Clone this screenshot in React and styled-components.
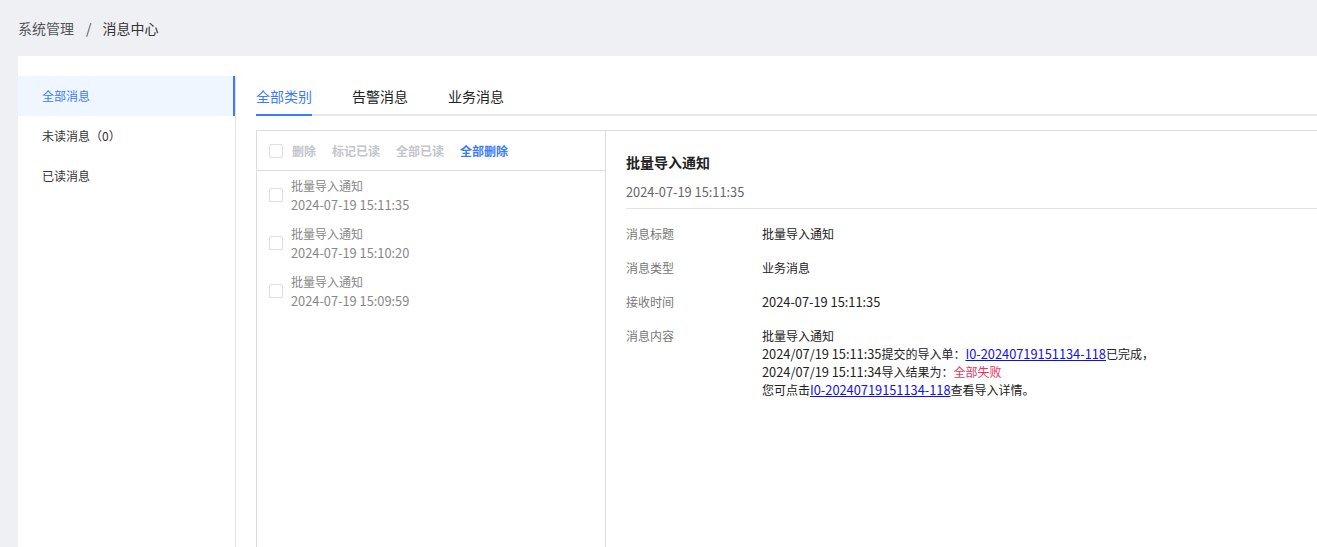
import React, { useState } from 'react';
import styled, { createGlobalStyle } from 'styled-components';

const GlobalStyle = createGlobalStyle`
  html, body {
    margin: 0;
    padding: 0;
    background: #eff0f4;
    overflow: hidden;
  }
  body {
    font-family: "Noto Sans CJK SC", "Noto Sans", sans-serif;
    font-size: 12px;
    color: #333;
  }
  * {
    box-sizing: border-box;
  }
`;

const Page = styled.div`
  width: 1420px;
  height: 620px;
  display: flex;
  flex-direction: column;
`;

const Breadcrumb = styled.div`
  height: 56px;
  display: flex;
  align-items: center;
  padding-left: 18px;
  font-size: 14px;
  color: #555;
`;
const Crumb = styled.span`
  color: ${(props) => (props.current ? '#333' : '#555')};
`;
const Sep = styled.span`
  margin: 0 11px 0 12px;
  color: #555;
`;

const Card = styled.div`
  flex: 1;
  margin-left: 18px;
  background: #fff;
  display: flex;
`;

const Menu = styled.ul`
  list-style: none;
  margin: 20px 0 0;
  padding: 0;
  width: 218px;
  border-right: 1px solid #e3e1ea;
`;
const MenuItem = styled.li`
  height: 40px;
  display: flex;
  align-items: center;
  padding-left: 24px;
  padding-bottom: 1px;
  font-size: 12px;
  color: ${(props) => (props.active ? '#3b7bff' : '#333')};
  background: ${(props) => (props.active ? '#f0f6ff' : 'transparent')};
  box-shadow: ${(props) => (props.active ? 'inset -2px 0 0 #3b7bff' : 'none')};
  cursor: pointer;
`;

const Main = styled.div`
  flex: 1;
  padding: 20px 0 0 20px;
  display: flex;
  flex-direction: column;
`;

const Tabs = styled.div`
  display: flex;
  gap: 40px;
  height: 40px;
  border-bottom: 2px solid #e4e7ed;
`;
const Tab = styled.div`
  font-size: 14px;
  display: flex;
  align-items: center;
  padding-top: 2px;
  margin-bottom: -2px;
  color: ${(props) => (props.active ? '#3b7bff' : '#222')};
  border-bottom: 2px solid ${(props) => (props.active ? '#3b7bff' : 'transparent')};
  cursor: pointer;
`;

const Box = styled.div`
  margin-top: 14px;
  flex: 1;
  display: flex;
  border: 1px solid #dcdcdc;
  border-bottom: none;
`;

const ListPanel = styled.div`
  width: 349px;
  border-right: 1px solid #dcdcdc;
`;
const Toolbar = styled.div`
  height: 40px;
  display: flex;
  align-items: center;
  padding-left: 12px;
  border-bottom: 1px solid #dcdcdc;
`;
const Check = styled.span`
  width: 14px;
  height: 14px;
  border: 1px solid #dcdfe6;
  border-radius: 2px;
  background: #fff;
  flex-shrink: 0;
`;
const Action = styled.span`
  font-size: 12px;
  font-weight: 700;
  margin-left: ${(props) => props.gap}px;
  color: ${(props) => (props.enabled ? '#3b7bff' : '#c3c5cb')};
  cursor: ${(props) => (props.enabled ? 'pointer' : 'default')};
`;

const Items = styled.div`
  padding-top: 0;
`;
const Item = styled.div`
  height: 48px;
  display: flex;
  align-items: center;
  padding-left: 12px;
  gap: 8px;
`;
const ItemText = styled.div`
  display: flex;
  flex-direction: column;
  color: #888;
  line-height: 19px;
`;
const ItemDate = styled.span`
  font-size: 12.8px;
`;

const Detail = styled.div`
  flex: 1;
  padding: 20px 0 0 20px;
`;
const DetailHead = styled.div`
  border-bottom: 1px solid #e4e4e8;
  padding-bottom: 6px;
`;
const DetailTitle = styled.div`
  font-size: 14px;
  font-weight: 700;
  color: #222;
  line-height: 22px;
`;
const DetailDate = styled.div`
  margin-top: 9px;
  font-size: 12.8px;
  color: #666;
  line-height: 20px;
`;
const Rows = styled.div`
  padding-top: 16px;
`;
const Row = styled.div`
  display: flex;
  line-height: 18px;
  margin-bottom: 16px;
`;
const Label = styled.div`
  width: 136px;
  color: #777;
  flex-shrink: 0;
`;
const Value = styled.div`
  color: #222;
`;
const Num = styled.span`
  font-size: 12.8px;
`;
const Link = styled.a`
  color: #1010ee;
  text-decoration: underline;
  font-size: 12.8px;
`;
const Fail = styled.span`
  color: #f0305a;
`;

const messages = [
  { title: '批量导入通知', time: '2024-07-19 15:11:35' },
  { title: '批量导入通知', time: '2024-07-19 15:10:20' },
  { title: '批量导入通知', time: '2024-07-19 15:09:59' },
];

export default function App() {
  const [menu, setMenu] = useState(0);
  const [tab, setTab] = useState(0);
  const menus = ['全部消息', '未读消息（0）', '已读消息'];
  const tabs = ['全部类别', '告警消息', '业务消息'];

  return (
    <Page>
      <GlobalStyle />
      <Breadcrumb>
        <Crumb>系统管理</Crumb>
        <Sep>/</Sep>
        <Crumb current>消息中心</Crumb>
      </Breadcrumb>
      <Card>
        <Menu>
          {menus.map((m, i) => (
            <MenuItem key={m} active={i === menu} onClick={() => setMenu(i)}>
              {m}
            </MenuItem>
          ))}
        </Menu>
        <Main>
          <Tabs>
            {tabs.map((t, i) => (
              <Tab key={t} active={i === tab} onClick={() => setTab(i)}>
                {t}
              </Tab>
            ))}
          </Tabs>
          <Box>
            <ListPanel>
              <Toolbar>
                <Check />
                <Action gap={9}>删除</Action>
                <Action gap={16}>标记已读</Action>
                <Action gap={16}>全部已读</Action>
                <Action gap={16} enabled>
                  全部删除
                </Action>
              </Toolbar>
              <Items>
                {messages.map((m) => (
                  <Item key={m.time}>
                    <Check />
                    <ItemText>
                      <span>{m.title}</span>
                      <ItemDate>{m.time}</ItemDate>
                    </ItemText>
                  </Item>
                ))}
              </Items>
            </ListPanel>
            <Detail>
              <DetailHead>
                <DetailTitle>批量导入通知</DetailTitle>
                <DetailDate>2024-07-19 15:11:35</DetailDate>
              </DetailHead>
              <Rows>
                <Row>
                  <Label>消息标题</Label>
                  <Value>批量导入通知</Value>
                </Row>
                <Row>
                  <Label>消息类型</Label>
                  <Value>业务消息</Value>
                </Row>
                <Row>
                  <Label>接收时间</Label>
                  <Value>
                    <Num>2024-07-19 15:11:35</Num>
                  </Value>
                </Row>
                <Row>
                  <Label>消息内容</Label>
                  <Value>
                    批量导入通知
                    <br />
                    <Num>2024/07/19 15:11:35</Num>提交的导入单：
                    <Link href="#">I0-20240719151134-118</Link>已完成，
                    <br />
                    <Num>2024/07/19 15:11:34</Num>导入结果为：<Fail>全部失败</Fail>
                    <br />
                    您可点击<Link href="#">I0-20240719151134-118</Link>查看导入详情。
                  </Value>
                </Row>
              </Rows>
            </Detail>
          </Box>
        </Main>
      </Card>
    </Page>
  );
}
